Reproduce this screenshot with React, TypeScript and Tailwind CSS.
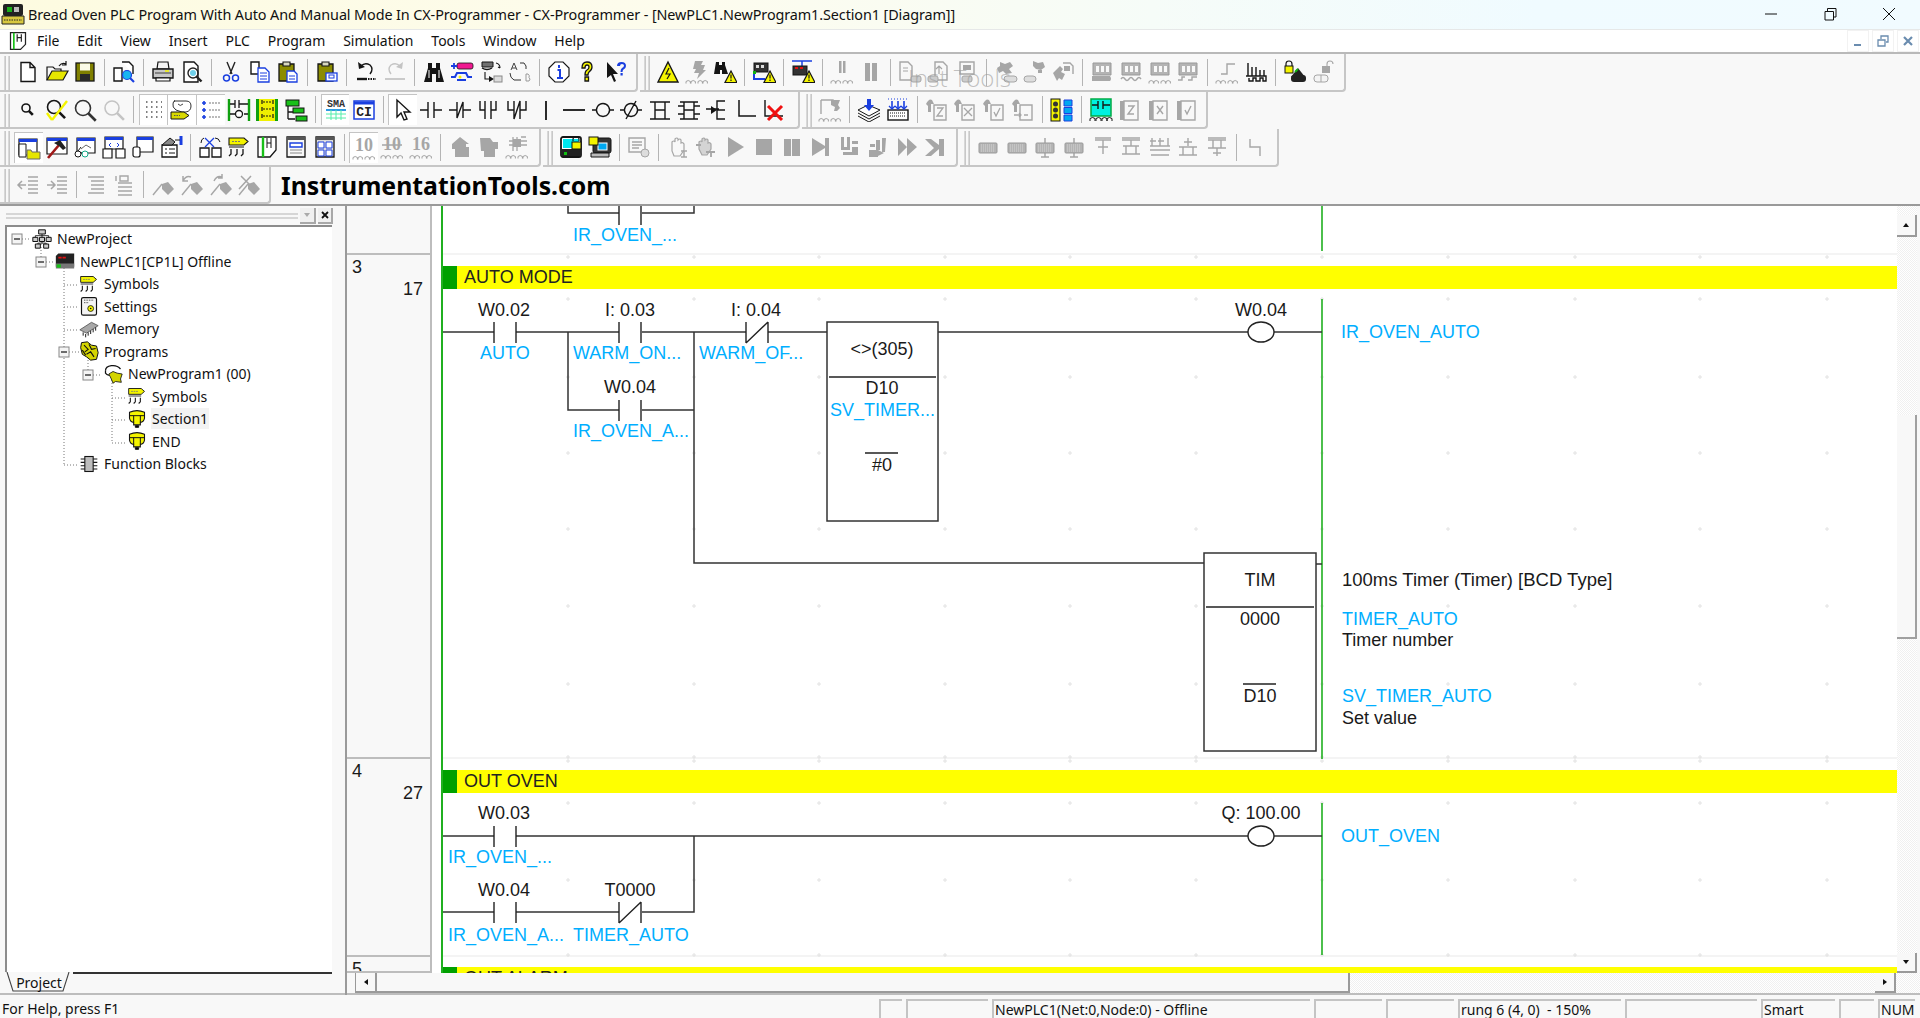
import React from "react";

const K = "#151515";
const G = "#a6a6a6";
const Y = "#f4f400";
const BL = "#1a3fe0";

type SP = { d: string; c?: string; w?: number; f?: string };
const S = ({ d, c = K, w = 1.4, f = "none" }: SP) => <path d={d} stroke={c} strokeWidth={w} fill={f} />;
const F = ({ d, c = G }: { d: string; c?: string }) => <path d={d} fill={c} />;
const Tx = ({ x, y, s, c = K, t, fam = "Liberation Mono, monospace" }: { x: number; y: number; s: number; c?: string; t: string; fam?: string }) => (
  <text x={x} y={y} fontSize={s} fill={c} textAnchor="middle" fontFamily={fam} fontWeight="bold">
    {t}
  </text>
);
const SERIF = "Liberation Serif, serif";
const Wave = <S d="M1 23.5v-2q2.2-2 4.4 0v2M6 23.5v-2q2.2-2 4.4 0v2M13 23.5v-2q2.2-2 4.4 0v2M18 23.5v-2q2.2-2 4.4 0v2" c="#999" w={0.9} />;
const Warn = ({ x = 12, y = 11 }: { x?: number; y?: number }) => (
  <g transform={`translate(${x} ${y})`}>
    <path d="M6 0l6 11.5H0z" fill={Y} stroke={K} strokeWidth="1.2" />
    <path d="M6 3.5v4M6 8.5v1.5" stroke={K} strokeWidth="1.2" />
  </g>
);
const Mag = ({ c = K, r = 6, x = 10, y = 10, k = 1.6 }: { c?: string; r?: number; x?: number; y?: number; k?: number }) => (
  <g>
    <circle cx={x} cy={y} r={r} fill="none" stroke={c} strokeWidth={k} />
    <path d={`M${x + r * 0.7} ${y + r * 0.7}l${r} ${r}`} stroke={c} strokeWidth={k + 1} />
  </g>
);
const Sym = (
  <>
    <path d="M2 3h15l4 3.5-4 3.5H2z" fill={Y} stroke={K} strokeWidth="1.1" />
    <path d="M5 6.5h8" stroke="#777" strokeWidth="1" strokeDasharray="2 1" />
    <path d="M2 12h15" stroke={K} strokeWidth="1" />
    <S d="M4 14v5l-2 2M10 14v5l-2 2M16 14v5l-2 2" w={1.3} />
  </>
);
const Cup = (
  <>
    <path d="M3 4q9-4 18 0v7q-1 5-5 5v3h-8v-3q-4 0-5-5z" fill={Y} stroke={K} strokeWidth="1.3" />
    <path d="M3 8h18M8 8v8M16 8v8M10 20h4v2h-4z" stroke={K} strokeWidth="1.2" />
  </>
);
const Chip = (
  <>
    <rect x="7" y="3" width="10" height="18" fill="#bdbdbd" stroke={K} strokeWidth="1.3" />
    <path d="M2 6h5M2 10h5M2 14h5M2 18h5M17 6h5M17 10h5M17 14h5M17 18h5" stroke={K} strokeWidth="1.3" />
  </>
);
const GDoc = ({ m }: { m: string }) => (
  <>
    <F d="M1 6q3-6 6-4l2 4H6v8H3V8z" />
    <path d="M9 7h12v15H9z" fill="#f8f8f8" stroke={G} strokeWidth="1.4" />
    <S d={m} c={G} w={1.3} />
  </>
);
const GFlag = ({ m }: { m: string }) => (
  <>
    <F d="M11 11l6-2 6 7-6 6-6-6z" />
    <S d="M2 22l9-11" c={G} w={1.4} />
    <S d={m} c={G} w={1.5} />
  </>
);
const Bus = ({ m }: { m: string }) => <S d={m} c={G} w={1.4} />;
const GChip = ({ v }: { v?: boolean }) => (
  <>
    {v && <path d="M12 3v5M12 18v4M8 22h8" stroke={G} strokeWidth="1.5" />}
    <rect x="3" y="8" width="18" height="10" rx="1" fill="#b4b4b4" stroke="#999" strokeWidth="1" />
    <path d="M5 10h14M5 12h14M5 14h14M5 16h14" stroke="#ddd" strokeWidth="0.8" strokeDasharray="1 1" />
  </>
);
const Mem = (
  <>
    <path d="M3 3h18v12H3z" fill="#b4b4b4" stroke="#999" />
    <path d="M6 6h3v6H6zM11 6h3v6h-3zM16 6h3v6h-3z" fill="#f8f8f8" />
  </>
);

const icons: Record<string, React.ReactNode> = {
  new: <S d="M5 2.5h9l5 5v14H5zM14 2.5v5h5" f="#fff" />,
  open: (
    <>
      <path d="M2 20V7h6l2 2h6v3" fill="#f8f8f8" stroke={K} strokeWidth="1.2" />
      <path d="M2 20l5-9h16l-5 9z" fill="#e6e600" stroke={K} strokeWidth="1.2" />
      <S d="M14 6q3-4 7-2M21 1v4h-4" w={1.2} />
    </>
  ),
  save: (
    <>
      <rect x="3" y="3" width="18" height="18" fill="#808000" stroke={K} strokeWidth="1.3" />
      <rect x="7" y="3.5" width="10" height="7" fill="#fbfbe8" />
      <rect x="7" y="14" width="10" height="7" fill="#2a2a2a" />
    </>
  ),
  docfind: (
    <>
      <S d="M2 8h8v13H2z" f="#fff" />
      <S d="M10 2h7l4 4v8" f="#fff" />
      <circle cx="15" cy="15" r="4.5" fill="#19b5f0" stroke={BL} strokeWidth="1.2" />
      <path d="M18 18l4 4" stroke={BL} strokeWidth="2.2" />
    </>
  ),
  print: (
    <>
      <path d="M7 2h10l1 7H6z" fill="#f4f4f4" stroke={K} strokeWidth="1.2" />
      <path d="M2 9h20v9H2z" fill="#c8c8c8" stroke={K} strokeWidth="1.4" />
      <path d="M5 18h14v3H5z" fill="#fff" stroke={K} strokeWidth="1.2" />
      <path d="M4 13h16" stroke="#555" strokeWidth="1.2" />
      <path d="M14 11h4" stroke={Y} strokeWidth="1.5" />
    </>
  ),
  preview: (
    <>
      <S d="M4 2h10l4 4v16H4z" f="#fff" />
      <Mag x={13} y={13} r={5} c="#222" k={1.4} />
      <circle cx="13" cy="13" r="3" fill="#6fd0ea" />
    </>
  ),
  cut: (
    <>
      <S d="M8 2l5 12M16 2l-5 12" c="#222" w={1.4} />
      <circle cx="7.5" cy="18" r="3" fill="none" stroke={BL} strokeWidth="1.5" />
      <circle cx="16.5" cy="18" r="3" fill="none" stroke={BL} strokeWidth="1.5" />
    </>
  ),
  copy: (
    <>
      <S d="M3 2h8v12H3z" f="#fff" />
      <path d="M10 8h7l4 4v10H10z" fill="#fff" stroke={BL} strokeWidth="1.3" />
      <path d="M12 13h7M12 16h7M12 19h7" stroke={BL} strokeWidth="1" />
    </>
  ),
  paste: (
    <>
      <path d="M3 4h15v17H3z" fill="#8c8c00" stroke={K} strokeWidth="1.3" />
      <path d="M7 2h7v4H7z" fill="#d8d8c0" stroke={K} strokeWidth="1.1" />
      <path d="M11 11h7l3 3v8H11z" fill="#fff" stroke={BL} strokeWidth="1.3" />
      <path d="M13 16h6M13 19h6" stroke={BL} strokeWidth="1" />
    </>
  ),
  paste2: (
    <>
      <path d="M3 4h15v17H3z" fill="#8c8c00" stroke={K} strokeWidth="1.3" />
      <path d="M7 2h7v4H7z" fill="#d8d8c0" stroke={K} strokeWidth="1.1" />
      <rect x="11" y="13" width="11" height="8" fill="#fff" stroke={BL} strokeWidth="1.3" />
      <rect x="14" y="15" width="5" height="3" fill="#fff" stroke={BL} strokeWidth="1" />
    </>
  ),
  undo: (
    <>
      <S d="M16 14q4-5 0-9-5-3-9 1" w={1.4} />
      <path d="M4 2l1 7 6-2z" fill={K} />
      <path d="M3 19h10" stroke={K} strokeWidth="2.4" />
      <path d="M14 19h8" stroke={K} strokeWidth="2" strokeDasharray="1.5 1" />
    </>
  ),
  redo: (
    <>
      <S d="M8 14q-4-5 0-9 5-3 9 1" c="#c4c4c4" w={1.4} />
      <path d="M20 2l-1 7-6-2z" fill="#c4c4c4" />
      <path d="M2 19h20" stroke="#c4c4c4" strokeWidth="1.8" />
    </>
  ),
  binoc: (
    <>
      <F c={K} d="M6 3h4v5h4V3h4v5l4 14h-8v-8h-4v8H2L6 8z" />
      <path d="M7 10v8M17 10v8" stroke="#fff" strokeWidth="1" />
    </>
  ),
  link: (
    <>
      <rect x="7" y="3" width="16" height="6" rx="2" fill="#f01890" stroke={K} strokeWidth="0.8" />
      <S d="M1 6h6M4 3v6" c={BL} w={1.8} />
      <S d="M1 17h4l2-4h9l2 4h4M7 20h9" c={BL} w={2} />
      <circle cx="10" cy="17" r="1.5" fill={Y} />
    </>
  ),
  swap: (
    <>
      <path d="M3 2h11v5H3z" fill="#707070" stroke={K} strokeWidth="1" />
      <path d="M3 8q5 3 10 0" stroke={K} strokeWidth="1.4" fill="none" />
      <S d="M17 3q4 1 4 5M21 8l-2-1M6 12v7h4" w={1.1} />
      <path d="M10 16l5 3-5 3z" fill={K} />
      <rect x="15" y="16" width="8" height="6" fill="#ddd" stroke="#888" />
    </>
  ),
  ab: (
    <>
      <S d="M6 3l3 7M6 3l-3 7M4 8h4" c="#444" w={1} />
      <S d="M12 3h4q3 3 2 6M2 13q0 5 4 7h7" c="#333" w={1} />
      <path d="M18 14v7h3q2-2 0-3.5q1-2-1-3.5z" fill="none" stroke="#999" />
    </>
  ),
  info: (
    <>
      <path d="M8 2h8l6 6v8l-6 6H8l-6-6V8z" fill="#fff" stroke={K} strokeWidth="1.2" />
      <path d="M10.5 10H13v8M10 18h6M12 5v3" stroke={BL} strokeWidth="2" fill="none" />
    </>
  ),
  help: <path d="M7 8q0-6 5-6t5 5q0 3-3 5-1 1-1 3h-3q0-4 2-5 2-1 2-3 0-2-2-2-2 0-2 3zM10 17h3.5v4H10z" fill={Y} stroke={K} strokeWidth="1.3" />,
  helpptr: (
    <>
      <path d="M3 2v16l4-3 3 7 2-1-3-7h5z" fill={K} />
      <path d="M13 6q0-4 4.5-4T22 6q0 2-2.5 3.5-1 .5-1 2.5h-2q0-3 1.5-4 2-1 2-2.5 0-1.5-2-1.5-2 0-2 2zM16.5 13h2.2v2.5h-2.2z" fill={BL} />
    </>
  ),
  warn7: (
    <>
      <path d="M12 2l10 20H2z" fill={Y} stroke={K} strokeWidth="1.4" />
      <path d="M13 8l-3 6h4l-3 5" stroke={K} strokeWidth="1.2" fill="none" />
    </>
  ),
  gbolt: (
    <>
      <F d="M10 1h8l-2 4h4l-2 5h3l-9 9 2-6H9l2-4H8z" />
      {Wave}
    </>
  ),
  binwarn: (
    <>
      <F c={K} d="M3 2h3v3h3V2h3v3l3 9H9v-4H7v4H1z" />
      <Warn />
    </>
  ),
  boxwarn: (
    <>
      <rect x="2" y="3" width="14" height="9" fill="#333" stroke={K} />
      <path d="M4 5h3v3H4zM9 5h3v3H9z" fill="#ddd" />
      <path d="M2 12v7h11" stroke={BL} strokeWidth="2" fill="none" />
      <rect x="1" y="11" width="3" height="3" fill="#10b010" />
      <Warn />
    </>
  ),
  topwarn: (
    <>
      <path d="M1 1h20M11 1v5" stroke={BL} strokeWidth="1.5" />
      <rect x="2" y="6" width="14" height="9" fill="#333" stroke={K} />
      <path d="M4 8h3M9 8h3" stroke="#e01010" strokeWidth="2" />
      <Warn />
    </>
  ),
  gpause2: (
    <>
      <path d="M9 1h2.5v12H9zM13 1h2.5v12H13z" fill={G} />
      {Wave}
    </>
  ),
  gpause: <path d="M6 3h5v18H6zM13 3h5v18h-5z" fill={G} />,
  gdoc1: (
    <>
      <S d="M2 2h8l4 4v14H2z" c={G} />
      <S d="M5 8h5M5 11h5" c={G} w={1} />
      <rect x="13" y="16" width="10" height="6" rx="2" fill="#ccc" stroke={G} />
    </>
  ),
  gdoc2: (
    <>
      <S d="M8 2h8l4 4v14H8z" c={G} />
      <path d="M12 6v8M9 9l3-3 3 3" stroke={G} strokeWidth="1.2" fill="none" />
      <rect x="1" y="16" width="10" height="6" rx="2" fill="#ccc" stroke={G} />
    </>
  ),
  gdoc3: (
    <>
      <S d="M5 2h14v12H5z" c={G} />
      <path d="M8 5h8v5H8z" fill={G} />
      <rect x="7" y="16" width="10" height="6" rx="2" fill="#ccc" stroke={G} />
    </>
  ),
  gflow1: (
    <>
      <F d="M6 2l5 2 5-2 3 4-4 3 3 4-6 1-3-3-4 2-2-5 3-2z" />
      <rect x="10" y="16" width="13" height="6" rx="3" fill="#ddd" stroke={G} />
    </>
  ),
  gflow2: (
    <>
      <F d="M10 1l5 2 5-1 2 5-4 3-5-1-3-3z" />
      <F d="M15 10h4v3h-4z" />
      <rect x="1" y="16" width="12" height="6" rx="3" fill="#ddd" stroke={G} />
    </>
  ),
  gflow3: (
    <>
      <S d="M12 3h7l3 3v8" c={G} />
      <F d="M2 13l7-7 3 3-2 3 4 2-3 6-3-2-2 3z" />
      <F d="M13 6h6v5h-6z" />
    </>
  ),
  mem1: (
    <>
      {Mem}
      <path d="M2 16h18q2 3 0 5H2z" fill="#a8a8a8" />
    </>
  ),
  mem2: (
    <>
      {Mem}
      <S d="M2 19q2-3 4 0t4 0 4 0 4 0 4 0" c={G} />
    </>
  ),
  mem3: (
    <>
      {Mem}
      {Wave}
    </>
  ),
  mem4: (
    <>
      {Mem}
      <S d="M2 20h4v-3h3M12 20h4v-3h5" c={G} />
    </>
  ),
  step: (
    <>
      <S d="M6 14h6V4h8" c={G} />
      {Wave}
    </>
  ),
  pulse: <S d="M4 3v13M8 7v9M12 7v9M16 10v6M20 10v6M2 16h20v5h-3v-3h-3v3h-4v-3H9v3H5v-3" w={1.4} />,
  lock: (
    <>
      <S d="M3 6V4q0-3 3-3t3 3v2" w={1.2} />
      <rect x="2" y="6" width="8" height="7" fill={Y} stroke={K} />
      <path d="M15 8l7 9H8z" fill="#222" />
      <path d="M12 12l3-3" stroke="#10b010" strokeWidth="2" />
      <rect x="8" y="15" width="15" height="7" rx="3" fill="#222" />
    </>
  ),
  unlock: (
    <>
      <S d="M16 6V4q0-3 3-3t3 3" c={G} w={1.1} />
      <rect x="11" y="6" width="8" height="7" fill={G} />
      <rect x="3" y="15" width="14" height="7" rx="3" fill="#f4f4f4" stroke={G} />
      <path d="M10 15v7" stroke={G} />
    </>
  ),
  zs: <Mag x={10} y={10} r={4} />,
  zcheck: (
    <>
      <Mag x={9} y={9} r={6.5} />
      <path d="M7 22L22 3" stroke={Y} strokeWidth="2.4" />
      <path d="M2 15l5 7" stroke={Y} strokeWidth="2.4" />
    </>
  ),
  z: <Mag x={10} y={10} r={7.5} c="#333" />,
  zg: <Mag x={10} y={10} r={7} c="#c4c4c4" />,
  grid: <path d="M4 4h16M4 9h16M4 14h16M4 19h16" stroke="#555" strokeWidth="1.5" strokeDasharray="1.5 3.5" />,
  bubble: (
    <>
      <path d="M4 3h12q5 0 5 5t-5 6l-4 0-6-2q-4-3-3-6 0-3 2-3z" fill="#fff" stroke="#333" />
      <path d="M8 6q2 3 5 0" stroke="#444" fill="none" />
      <path d="M1 14h13l5 3.5-5 3.5H1z" fill="#d8d800" stroke={K} />
      <path d="M4 17.5h6" stroke="#555" strokeDasharray="1.5 1" />
    </>
  ),
  list: (
    <>
      <path d="M5 3v4M3 5h4M5 10v4M3 12h4M5 17v4M3 19h4" stroke={BL} strokeWidth="1.6" />
      <path d="M10 5h11M10 12h11M10 19h11" stroke="#777" strokeWidth="1.2" strokeDasharray="2 1" />
    </>
  ),
  rungs: (
    <>
      <path d="M2 1v22M22 1v22" stroke="#10a010" strokeWidth="2.4" />
      <S d="M3 6h5M8 2v8M12 2v8M12 6h9M3 16h5M17 16h4" w={1.3} />
      <circle cx="12" cy="16" r="3.5" fill="#fff" stroke={K} strokeWidth="1.3" />
    </>
  ),
  ybar: (
    <>
      <path d="M1 1h3v22H1zM20 1h3v22h-3z" fill="#10a010" />
      <path d="M4 1h16v22H4z" fill="#f0f000" />
      <path d="M8 4h9M8 11h9M8 18h9" stroke={K} strokeWidth="1.2" strokeDasharray="2 1" />
      <path d="M7 2v4M18 2v4M7 9v4M18 9v4M7 16v4M18 16v4" stroke={K} strokeWidth="1.2" />
    </>
  ),
  tree: (
    <>
      <path d="M4 8v13M4 14h7M4 21h7" stroke={K} strokeWidth="1.3" fill="none" />
      <rect x="2" y="2" width="13" height="6" fill="#18c018" stroke={K} />
      <rect x="9" y="10" width="11" height="5" fill="#18c018" stroke={K} />
      <rect x="12" y="18" width="11" height="5" fill="#18c018" stroke={K} />
    </>
  ),
  sma: (
    <>
      <Tx x={12} y={9} s={10} t="SMA" c="#333" />
      <path d="M2 12h20" stroke="#1890e0" strokeWidth="1.8" />
      <path d="M2 16h20M2 20h20M7 12v10M12 12v10M17 12v10" stroke="#5ea" strokeWidth="1" />
    </>
  ),
  ci: (
    <>
      <rect x="2" y="3" width="20" height="18" fill="#fff" stroke={BL} strokeWidth="1.5" />
      <path d="M2 5h20" stroke={BL} strokeWidth="3" />
      <Tx x={12} y={18} s={13} t="CI" c="#222" />
    </>
  ),
  cursor: <path d="M6 2v17l4-4 3 7 3-1-3-7h6z" fill="#fff" stroke={K} strokeWidth="1.4" />,
  cno: <S d="M1 12h8M9 4v16M15 4v16M15 12h8" />,
  cnc: <S d="M1 12h8M9 4v16L15 4v16M15 12h8" />,
  ono: <S d="M4 3v9h5M9 21V3M15 3v18M15 12h5V3" />,
  onc: <S d="M3 3v9h6M9 3v18L15 3v18M15 12h6V3" />,
  vl: <S d="M12 3v19" w={1.8} />,
  hl: <S d="M1 12h22" w={1.8} />,
  coil: <S d="M1 12h5M18 12h5M12 5.5a6.5 6.5 0 1 0 .01 0z" />,
  ncoil: <S d="M1 12h5M18 12h5M12 5.5a6.5 6.5 0 1 0 .01 0zM7 21L17 3" />,
  ins: <S d="M2 4h20M2 21h20M7 4v17M17 4v17M7 12h10" />,
  ins2: <S d="M3 4h18M3 21h18M7 4v17M17 4v17M7 12h10M1 8h6M1 16h6M17 8h6M17 16h6" />,
  ins3: (
    <>
      <S d="M1 11h6M20 3h-8v18h8M12 12h8M14 11H7" />
      <path d="M6 8l6 4-6 4z" fill={K} />
    </>
  ),
  corner: <S d="M5 2v16h17" w={1.5} />,
  xline: (
    <>
      <S d="M3 2v16h18" />
      <path d="M6 8l14 14M20 8L6 22" stroke="#f01010" strokeWidth="3" />
    </>
  ),
  gdocrung: (
    <>
      <S d="M3 2h12v5" c={G} />
      <S d="M3 2v14" c={G} />
      <F d="M13 2h9l-2 5 2 3-3 3h-3l1-4-4-2z" />
      {Wave}
    </>
  ),
  stackdown: (
    <>
      <path d="M1 12l10-5 12 5-11 6z" fill="#fff" stroke={K} />
      <path d="M1 15l11 6 11-6M1 18l11 6 11-6" fill="none" stroke={K} />
      <path d="M10 1h4v6h3l-5 6-5-6h3z" fill={BL} />
    </>
  ),
  griddown: (
    <>
      <rect x="2" y="12" width="20" height="10" fill="#fff" stroke={K} strokeWidth="1.4" />
      <path d="M4 15h16M4 18h16" stroke={K} strokeDasharray="1 1" />
      <path d="M6 3v7M12 3v7M18 3v7" stroke={BL} strokeWidth="1.6" />
      <path d="M3 8l3 3 3-3M9 8l3 3 3-3M15 8l3 3 3-3" stroke={BL} fill="none" strokeWidth="1.3" />
      <path d="M2 1h20" stroke={BL} strokeDasharray="1 2" />
    </>
  ),
  gdz: <GDoc m="M12 10h6l-6 8h6" />,
  gdx: <GDoc m="M11 10l8 8M19 10l-8 8" />,
  gdchk: <GDoc m="M12 14l2 4 4-8" />,
  gdin: <GDoc m="M3 17h7M8 15l2 2-2 2M13 17h4" />,
  traffic: (
    <>
      <rect x="1" y="1" width="9" height="22" fill={Y} stroke={K} />
      <circle cx="5.5" cy="6" r="2.5" fill="#333" />
      <circle cx="5.5" cy="12" r="2.5" fill="#333" />
      <circle cx="5.5" cy="18" r="2.5" fill="#333" />
      <path d="M14 2h8v6h-8zM14 9.5h8v6h-8zM14 17h8v6h-8z" fill="#00a8f0" stroke={BL} />
    </>
  ),
  ladder: (
    <>
      <rect x="2" y="1" width="20" height="17" fill="#00f0e0" stroke="#0a4" strokeWidth="1.5" />
      <S d="M3 7h6M9 3v8M14 3v8M14 7h7" />
      <S d="M1 23v-2.5q2.5-2 5 0V23M7 23v-2.5q2.5-2 5 0V23M13 23v-2.5q2.5-2 5 0V23M18 23v-2.5q2.5-2 5 0V23" w={1} />
    </>
  ),
  gpgz: <><path d="M3 3h4v19H3z" fill={G} /><S d="M7 3h14v19H7zM11 8h6l-6 8h6" c={G} /></>,
  gpgx: <><path d="M3 3h4v19H3z" fill={G} /><S d="M7 3h14v19H7zM11 8l6 8M17 8l-6 8" c={G} /></>,
  gpgc: <><path d="M3 3h4v19H3z" fill={G} /><S d="M7 3h14v19H7zM11 12l2 4 4-8" c={G} /></>,
  winf: (
    <>
      <path d="M2 3h18v16H2z" fill="#fff" stroke={K} strokeWidth="1.2" />
      <path d="M2 3h18v3H2z" fill={BL} />
      <path d="M2 8h7v13H2z" fill="#fff" stroke={K} />
      <path d="M10 14h4l1 2h8v7H10z" fill="#e6e600" stroke="#666" />
    </>
  ),
  hammer: (
    <>
      <path d="M2 3h20v16H2z" fill="#fff" stroke={K} strokeWidth="1.2" />
      <path d="M2 3h20v3H2z" fill={BL} />
      <path d="M3 23L14 10" stroke="#a01818" strokeWidth="2.6" />
      <path d="M9 8l6-3 6 8-3 2-4-4z" fill="#222" />
    </>
  ),
  glass: (
    <>
      <path d="M4 3h18v15H4z" fill="#fff" stroke={K} strokeWidth="1.2" />
      <path d="M4 3h18v3H4z" fill={BL} />
      <path d="M8 14l5-4 5 3" stroke="#666" fill="none" />
      <circle cx="5" cy="19" r="3" fill="#fff" stroke={K} />
      <circle cx="12" cy="19" r="3" fill="#fff" stroke="#1a8" />
      <path d="M8 18h1M5 16l3-4" stroke={K} />
    </>
  ),
  win2: (
    <>
      <path d="M3 2h18v12H3z" fill="#fff" stroke={K} strokeWidth="1.2" />
      <path d="M3 2h18v3H3z" fill={BL} />
      <path d="M9 8l-2 2 2 2M15 8l2 2-2 2" stroke={BL} fill="none" />
      <path d="M1 14h9v9H1zM14 14h9v9h-9z" fill="#fff" stroke={K} strokeWidth="1.2" />
    </>
  ),
  win3: (
    <>
      <path d="M6 2h16v15H6z" fill="#fff" stroke={K} strokeWidth="1.2" />
      <path d="M6 2h16v3H6z" fill={BL} />
      <rect x="2" y="12" width="7" height="10" rx="2" fill="#fff" stroke={K} strokeWidth="1.2" />
    </>
  ),
  conf: (
    <>
      <path d="M3 10h15v12H3z" fill="#fff" stroke={K} strokeWidth="1.3" />
      <path d="M6 14h2M6 18h2M10 14h6M10 18h6" stroke={K} />
      <path d="M3 10l8-7 5 4-3 3z" fill="#888" stroke={K} />
      <path d="M22 1v9" stroke={BL} strokeWidth="3" />
      <path d="M16 5h5" stroke={K} />
    </>
  ),
  dup: (
    <>
      <path d="M2 13h9v9H2zM14 13h9v9h-9z" fill="#fff" stroke={K} strokeWidth="1.3" />
      <path d="M7 3l9 9M16 3l-9 9" stroke={BL} strokeWidth="1.3" />
      <S d="M3 8q0-4 3-5M17 3q4 0 5 4" w={1} />
    </>
  ),
  sym: Sym,
  ldoc: (
    <>
      <path d="M3 2h18v13l-6 7H3z" fill="#fff" stroke={K} strokeWidth="1.3" />
      <path d="M8 2v20" stroke="#18c018" strokeWidth="2.4" />
      <path d="M12 3v10M16 3v10M12 8h4" stroke={K} />
    </>
  ),
  form: (
    <>
      <path d="M3 2h18v20H3z" fill="#f8f8f8" stroke={K} strokeWidth="1.3" />
      <path d="M3 2h18v3H3z" fill="#555" />
      <path d="M6 8h12v4H6z" fill="#fff" stroke={BL} strokeWidth="1.4" />
      <path d="M6 15h12M6 18h12" stroke="#888" />
    </>
  ),
  tbl: (
    <>
      <path d="M3 2h18v20H3z" fill="#ddd" stroke={K} strokeWidth="1.3" />
      <path d="M3 2h18v3H3z" fill="#555" />
      <path d="M5 7h6v6H5zM13 7h6v6h-6zM5 15h6v6H5zM13 15h6v6h-6z" fill="#fff" stroke={BL} />
    </>
  ),
  n10: (
    <>
      <Tx x={12} y={15} s={18} t="10" c={G} fam={SERIF} />
      {Wave}
    </>
  ),
  n10s: (
    <>
      <Tx x={12} y={15} s={18} t="10" c={G} fam={SERIF} />
      <path d="M2 10h20" stroke={G} strokeWidth="1.5" />
      {Wave}
    </>
  ),
  n16: (
    <>
      <Tx x={12} y={15} s={18} t="16" c={G} fam={SERIF} />
      {Wave}
    </>
  ),
  gh1: <F d="M12 2l9 7h-3v3h3v10H7v-8H4V9z" />,
  gh2: <F d="M4 3h10l3 4h5v7h-3v8H8v-6H5z" />,
  gh3: (
    <>
      <S d="M8 2v14M12 2v14M16 2h5M16 6h6M16 10h6M4 6h4M4 10h4" c={G} w={1.3} />
      <F d="M8 4h8v8H8z" />
      {Wave}
    </>
  ),
  mon: (
    <>
      <rect x="2" y="2" width="20" height="20" rx="2" fill="#fff" stroke={K} strokeWidth="1.8" />
      <rect x="4" y="4" width="16" height="9" fill="#00e8f0" />
      <path d="M2 14h20v7H2z" fill="#222" />
      <path d="M5 17h3v3H5z" fill="#10c010" />
      <S d="M14 6V4q0-2 3-2t3 2v2" w={1.1} />
      <rect x="13" y="7" width="9" height="7" fill={Y} stroke={K} />
    </>
  ),
  mon2: (
    <>
      <rect x="5" y="3" width="18" height="15" rx="2" fill="#333" stroke={K} />
      <rect x="10" y="8" width="9" height="7" fill="#00a8f0" stroke="#fff" />
      <rect x="1" y="2" width="9" height="8" fill={Y} stroke={K} />
      <path d="M3 18h18v4H3z" fill="#bbb" stroke={K} />
    </>
  ),
  gdocx: (
    <>
      <S d="M2 3h16v14H2zM5 7h10M5 10h10M5 13h7" c={G} />
      <circle cx="18" cy="18" r="4" fill="#ddd" stroke={G} />
    </>
  ),
  hand: (
    <>
      <S d="M6 16V7q2-2 3 0V4q2-2 3 0v1q2-2 3 0v3q2-1 3 1v6l-4 6h-6z" c={G} w={1.2} />
      <path d="M15 16h6M18 16v6M15 22h6" stroke={G} strokeWidth="1.5" />
    </>
  ),
  hand2: (
    <>
      <path d="M5 14V7q2-2 3 0V4q2-2 3 0v1q2-2 3 0v3q2-1 3 1v5l-4 6H8z" fill="#d4d4d4" stroke={G} strokeWidth="1.2" />
      <path d="M2 10h5M12 17h9M17 17v5" stroke={G} strokeWidth="1.8" />
    </>
  ),
  play: <F d="M5 2l16 10L5 22z" />,
  stop: <F d="M4 4h16v16H4z" />,
  pause: <path d="M4 4h7v17H4zM12 4h8v17h-8z" fill={G} />,
  next: <F d="M3 3l13 8V3h4v18h-4v-8L3 21z" />,
  stepin: <path d="M4 2h3v10h3V2h3v13H4zM15 6h6v3h-6zM15 12h6v8H6v-3h9z" fill={G} />,
  stepout: <path d="M16 3h4l-1 14h-3zM10 5h4v10h-4zM4 9h5v3H4zM3 15h9v7H3zM12 15l6 3-6 3z" fill={G} />,
  ff: <F d="M3 3l9 9-9 9zM12 3l10 9-10 9z" />,
  end: <path d="M2 4h6l8 6V4h5v17h-5v-7l-8 7H2l9-8z" fill={G} />,
  ch1: <GChip />,
  ch2: <GChip />,
  ch3: <GChip v />,
  ch4: <GChip v />,
  b1: <Bus m="M4 3h16M4 5h16M12 5v14M7 12h10" />,
  b2: <Bus m="M3 3h18M3 5h18M12 5v6M4 11h16M7 11v8M17 11v8M3 19h18" />,
  b3: <Bus m="M4 3v8M12 3v8M20 3v8M2 6h6M10 6h6M2 11h20M2 15h20M3 20h18" />,
  b4: <Bus m="M12 3v8M8 7h8M3 12h18M7 12v8M17 12v8M3 20h18" />,
  b5: <Bus m="M3 3h18M3 5h18M8 5v8M16 5v8M3 13h18M12 13v8M8 18h8" />,
  ang: <S d="M6 4v8h10v9" c={G} w={1.4} />,
  gin: <S d="M2 12h8M6 8l-4 4 4 4M12 4h10M12 8h10M12 12h10M12 16h10M12 20h10" c={G} w={1.5} />,
  gout: <S d="M2 12h8M6 8l4 4-4 4M12 4h10M12 8h10M12 12h10M12 16h10M12 20h10" c={G} w={1.5} />,
  gl1: <S d="M4 4h16M7 8h13M7 12h13M7 16h13M4 20h16" c={G} w={1.4} />,
  gl2: <S d="M8 3h8v5H8zM4 3v5M6 10h14M6 14h14M6 18h14M6 22h14" c={G} w={1.4} />,
  gf1: <GFlag m="" />,
  gf2: <GFlag m="M3 8q3-6 8-4M3 3v5h5" />,
  gf3: <GFlag m="M5 8q3-6 8-4M13 1v4H9" />,
  gf4: <GFlag m="M4 3l14 14M2 16L14 3" />,
};

const BarIcon = ({ k }: { k: string }) => (
  <svg viewBox="0 0 24 24" className="w-6 h-6">
    {icons[k]}
  </svg>
);

type Tb = { cls: string; items: string };
const rows: Tb[][] = [
  [
    { cls: "w-[638px]", items: "new open save | docfind | print preview | cut copy paste | paste2 | undo redo | binoc link swap ab | info help helpptr" },
    { cls: "w-[706px]", items: "warn7 gbolt binwarn | boxwarn | topwarn | gpause2 gpause | gdoc1 gdoc2 gdoc3 | gflow1 gflow2 gflow3 | mem1 mem2 mem3 mem4 | step pulse | lock unlock" },
  ],
  [
    { cls: "w-[800px]", items: "zs zcheck z zg | *grid *bubble *list rungs ybar tree | *sma ci | *cursor cno cnc ono onc vl hl coil ncoil ins ins2 ins3 corner xline" },
    { cls: "w-[406px]", items: "gdocrung | stackdown griddown | gdz gdx gdchk gdin | traffic | ladder gpgz gpgx gpgc" },
  ],
  [
    { cls: "w-[541px]", items: "*winf hammer glass win2 win3 conf | dup sym ldoc form tbl | *n10 n10s n16 | gh1 gh2 gh3" },
    { cls: "w-[415px]", items: "mon mon2 | gdocx | hand hand2 play stop pause next stepin stepout ff end" },
    { cls: "w-[319px]", items: "ch1 ch2 ch3 ch4 b1 b2 b3 b4 b5 | ang" },
  ],
  [{ cls: "w-[271px]", items: "gin gout | gl1 gl2 | gf1 gf2 gf3 gf4" }],
];

function Toolbar({ t }: { t: Tb }) {
  return (
    <div className={`${t.cls} h-full flex items-center border-b-2 border-r-2 border-[#c6c6c6] rounded-br-sm`}>
      <div className="w-[14px] h-full flex justify-center gap-[2px] shrink-0 pt-[2px]">
        <div className="w-[2px] border-x border-[#c8c8c8] border-l-[#d8d8d8]" />
        <div className="w-[2px] border-x border-[#c8c8c8] border-l-[#d8d8d8]" />
      </div>
      {t.items.split(" ").map((it, i) =>
        it === "|" ? (
          <div key={i} className="w-[10.4px] flex justify-center shrink-0">
            <div className="w-px h-[27px] bg-[#b4b4b4]" />
          </div>
        ) : (
          <div
            key={i}
            className={`w-[28.6px] h-[31px] flex items-center justify-center shrink-0 ${
              it[0] === "*" ? "bg-white border-t border-l border-[#c4c4c4]" : ""
            }`}
          >
            <BarIcon k={it.replace("*", "")} />
          </div>
        )
      )}
    </div>
  );
}

function TitleBar() {
  return (
    <div className="h-[30px] flex items-center bg-[linear-gradient(90deg,#fdfbe0_0%,#fdfced_35%,#f6fcf8_60%,#f0fbff_80%,#f1fbff_100%)] border-b border-[#e6e8e8]">
      <svg viewBox="0 0 24 24" className="w-6 h-6 ml-px shrink-0">
        <rect x="2" y="2" width="20" height="12" rx="2" fill="#222" />
        <path d="M6 5h5v5H6z" fill="#18b018" />
        <path d="M13 5h5v5h-5z" fill="#bbb" />
        <path d="M1 14h22v8H1z" fill="#d8c840" stroke="#222" />
        <path d="M3 18h18" stroke="#222" strokeDasharray="1.5 1" />
      </svg>
      <span className="ml-[3px] text-[14.4px] text-[#111] font-['Noto_Sans',sans-serif] tracking-[-0.1px] whitespace-nowrap">
        Bread Oven PLC Program With Auto And Manual Mode In CX-Programmer - CX-Programmer - [NewPLC1.NewProgram1.Section1 [Diagram]]
      </span>
      <div className="ml-auto flex pr-[2px]">
        <div className="w-[59px] flex justify-center">
          <svg viewBox="0 0 14 14" className="w-[14px] h-[14px]"><path d="M1 7h12" stroke="#111" strokeWidth="1" /></svg>
        </div>
        <div className="w-[59px] flex justify-center">
          <svg viewBox="0 0 14 14" className="w-[14px] h-[14px]"><path d="M2 4.5h8.5V13H2zM4.5 4V1.5H13V10h-2.5" fill="none" stroke="#111" strokeWidth="1" /></svg>
        </div>
        <div className="w-[59px] flex justify-center">
          <svg viewBox="0 0 14 14" className="w-[14px] h-[14px]"><path d="M1 1l12 12M13 1L1 13" stroke="#111" strokeWidth="1" /></svg>
        </div>
      </div>
    </div>
  );
}

function MenuBar() {
  return (
    <div className="h-[25px] bg-white flex items-center border-b-2 border-[#b9b9b9] text-[14px] text-[#111] font-['Noto_Sans',sans-serif]">
      <svg viewBox="0 0 24 24" className="w-[20px] h-[20px] ml-[8px]">
        <path d="M3 2h18v14l-6 6H3z" fill="#fff" stroke="#222" strokeWidth="1.5" />
        <path d="M7 2v20" stroke="#18c018" strokeWidth="2" />
        <path d="M11 4v9M16 4v9M11 8h5" stroke="#222" strokeWidth="1.4" />
      </svg>
      <div className="ml-[9px] flex gap-[17.9px]">
        {["File", "Edit", "View", "Insert", "PLC", "Program", "Simulation", "Tools", "Window", "Help"].map((m) => (
          <span key={m}>{m}</span>
        ))}
      </div>
      <div className="ml-auto flex gap-[3px] pr-px">
        <div className="w-[22px] h-[22px] border border-[#f2f2f2] flex items-center justify-center">
          <svg viewBox="0 0 12 12" className="w-3 h-3"><path d="M2 10h7" stroke="#6a8caf" strokeWidth="2" /></svg>
        </div>
        <div className="w-[22px] h-[22px] border border-[#f2f2f2] flex items-center justify-center">
          <svg viewBox="0 0 12 12" className="w-3 h-3"><path d="M1 5h7v6H1zM4 4V1h7v6H9" fill="none" stroke="#6a8caf" strokeWidth="1.3" /></svg>
        </div>
        <div className="w-[22px] h-[22px] border border-[#f2f2f2] flex items-center justify-center">
          <svg viewBox="0 0 12 12" className="w-3 h-3"><path d="M2 2l8 8M10 2l-8 8" stroke="#6a8caf" strokeWidth="2.2" /></svg>
        </div>
      </div>
    </div>
  );
}

const treeIcons: Record<string, React.ReactNode> = {
  project: (
    <>
      <path d="M8 1h8v5H8zM1 10h6v5H1zM9 10h6v5H9zM17 10h6v5h-6zM4 18h6v5H4zM14 18h6v5h-6z" fill="#ccc" stroke="#111" strokeWidth="1.2" />
      <path d="M12 6v4M4 10V8h16v2M12 15v2H7v1M12 17h5v1" stroke="#111" fill="none" />
    </>
  ),
  plc: (
    <>
      <path d="M1 6l3-3h19v16H1z" fill="#222" />
      <path d="M4 7h4v2H4zM9 7h4v2H9z" fill="#e01010" />
      <path d="M1 15h22v6H1z" fill="#777" />
      <path d="M2 16h5v4H2z" fill="#18c018" />
    </>
  ),
  sym: Sym,
  settings: (
    <>
      <rect x="3" y="2" width="18" height="21" rx="2" fill="#f4f4f4" stroke="#111" strokeWidth="1.4" />
      <path d="M6 5h12M6 8h5" stroke="#111" strokeDasharray="1 1" />
      <circle cx="14" cy="15" r="3.5" fill={Y} stroke="#111" />
      <circle cx="14" cy="15" r="1" fill="#111" />
    </>
  ),
  memory: (
    <>
      <path d="M1 13L15 4l8 4-14 9z" fill="#a8a8a8" stroke="#555" />
      <path d="M5 16v4M8 18v4M11 16v4M14 14v4M17 12v4M20 10v4" stroke="#222" strokeWidth="1.2" />
    </>
  ),
  programs: (
    <>
      <path d="M3 2l7-1 5 4 6 1 2 8-2 8-7 1-5-4-5-3-2-8z" fill="#d4d400" stroke="#111" strokeWidth="1.2" />
      <path d="M6 5l5 5-4 3M12 4l3 6 5-1M9 16l5-3 4 6M4 11l4 6" stroke="#111" strokeWidth="1.3" fill="none" />
    </>
  ),
  program: (
    <>
      <path d="M3 8q0-5 7-6t11 4" stroke="#111" strokeWidth="1.5" fill="none" />
      <path d="M3 8v3q2 3 5 2" stroke="#111" strokeWidth="1.5" fill="none" />
      <path d="M7 12l5-3 5 2 6 1-2 6 1 4-7-1-3 2-2-5z" fill="#d4d400" stroke="#111" />
    </>
  ),
  section: Cup,
  fb: Chip,
};

const tree = [
  { t: "NewProject", i: "project", cls: "pl-[25px]" },
  { t: "NewPLC1[CP1L] Offline", i: "plc", cls: "pl-[48px]" },
  { t: "Symbols", i: "sym", cls: "pl-[72px]" },
  { t: "Settings", i: "settings", cls: "pl-[72px]" },
  { t: "Memory", i: "memory", cls: "pl-[72px]" },
  { t: "Programs", i: "programs", cls: "pl-[72px]" },
  { t: "NewProgram1 (00)", i: "program", cls: "pl-[96px]" },
  { t: "Symbols", i: "sym", cls: "pl-[120px]" },
  { t: "Section1", i: "section", cls: "pl-[120px]", sel: true },
  { t: "END", i: "section", cls: "pl-[120px]" },
  { t: "Function Blocks", i: "fb", cls: "pl-[72px]" },
];

const TreeBox = ({ x, y }: { x: number; y: number }) => (
  <g>
    <rect x={x - 5} y={y - 5} width="10" height="10" fill="#f4f4f4" stroke="#888" />
    <path d={`M${x - 3} ${y}h6`} stroke="#111" strokeWidth="1.2" />
  </g>
);

function LeftPanel() {
  return (
    <div className="w-[345px] shrink-0 flex flex-col bg-[#f8f8f8] border-b-2 border-[#bdbdbd]">
      <div className="h-[19px] flex items-center pl-[6px]">
        <div className="w-[292px] h-[6px] border-y-2 border-[#d6d6d6]" />
        <div className="w-[16px] h-[16px] ml-[2px] bg-[#f0f0f0] border-r-2 border-b-2 border-[#a8a8a8] flex items-center justify-center">
          <svg viewBox="0 0 8 8" className="w-2 h-2"><path d="M1 2h6L4 6z" fill="#aaa" /></svg>
        </div>
        <div className="w-[15px] h-[16px] ml-[2px] bg-[#f0f0f0] border-r-2 border-b-2 border-[#a8a8a8] flex items-center justify-center">
          <svg viewBox="0 0 8 8" className="w-2 h-2"><path d="M1 1l6 6M7 1L1 7" stroke="#111" strokeWidth="1.8" /></svg>
        </div>
      </div>
      <div className="relative h-[747px] w-[327px] ml-[5px] bg-white border-l-2 border-t-2 border-[#8c8c8c] text-[14px] text-[#111] font-['Noto_Sans',sans-serif]">
        <svg viewBox="7 227 325 745" className="absolute left-0 top-0 w-[325px] h-[745px]">
          <path
            d="M22 239h9M41 241v16M46 262h8M64 268v198M64 285h15M64 307h15M64 330h15M69 352h10M88 357v13M93 375h9M112 380v63M112 398h14M112 420h14M112 443h14M64 465h14"
            stroke="#777"
            strokeDasharray="1 2"
            fill="none"
          />
          <TreeBox x={17} y={239} />
          <TreeBox x={41} y={262} />
          <TreeBox x={64} y={352} />
          <TreeBox x={88} y={375} />
        </svg>
        {tree.map((r, i) => (
          <div key={i} className={`relative h-[22.5px] flex items-center ${r.cls}`}>
            <svg viewBox="0 0 24 24" className="w-[20px] h-[20px] shrink-0">
              {treeIcons[r.i]}
            </svg>
            <span className={`ml-[4px] px-px whitespace-nowrap ${r.sel ? "bg-[#f3f3f3]" : ""}`}>{r.t}</span>
          </div>
        ))}
      </div>
      <div className="h-[21px] w-[327px] ml-[5px] flex">
        <div className="w-[68px] relative h-[20px] text-[14px] text-[#111] font-['Noto_Sans',sans-serif] flex justify-center items-center">
          <svg viewBox="0 0 68 20" className="absolute inset-0 w-[68px] h-[20px]">
            <path d="M2 0l6 19h50l6-19" fill="#f8f8f8" stroke="#444" strokeWidth="1.1" />
          </svg>
          <span className="relative">Project</span>
        </div>
        <div className="flex-1 border-t-2 border-[#333]" />
      </div>
    </div>
  );
}

const LBL = "#00aeff";
function T({ x, y, a, c, size, children }: { x: number; y: number; a?: "middle"; c?: string; size?: number; children: string }) {
  return (
    <text x={x} y={y + 6} textAnchor={a ?? "start"} fill={c ?? "#1a1a1a"} fontSize={size}>
      {children}
    </text>
  );
}
const Blue = (p: { x: number; y: number; children: string }) => <T {...p} c={LBL} />;
const Mid = (p: { x: number; y: number; children: string }) => <T {...p} a="middle" />;

const COLS = [568, 694, 819, 945, 1070, 1196, 1322, 1448, 1575, 1700, 1827];
function Dots({ ys }: { ys: number[] }) {
  return (
    <path
      d={ys.map((y) => COLS.map((x) => `M${x - 2} ${y}h4M${x} ${y - 2}v4`).join("")).join("")}
      stroke="#e2e2e2"
      strokeWidth="1"
    />
  );
}
function No({ x, y, nc }: { x: number; y: number; nc?: boolean }) {
  return (
    <path
      d={`M${x - 11} ${y - 10}v21M${x + 11} ${y - 10}v21${nc ? `M${x - 11} ${y + 11}L${x + 11} ${y - 10}` : ""}`}
      stroke="#222"
      strokeWidth="1.4"
      fill="none"
    />
  );
}
function Coil({ x, y }: { x: number; y: number }) {
  return <ellipse cx={x} cy={y} rx="13" ry="10" fill="#fff" stroke="#222" strokeWidth="1.4" />;
}
const Wire = ({ d }: { d: string }) => <path d={d} stroke="#333" strokeWidth="1.5" fill="none" />;
const Rail = ({ a, b }: { a: number; b: number }) => <path d={`M1322 ${a}V${b}`} stroke="#20b020" strokeWidth="1.6" />;

function Gutter({ n, o }: { n: string; o?: string }) {
  return (
    <div className="w-[85px] shrink-0 bg-[#f8f8f8] border-r-2 border-b-2 border-[#bdbdbd] pt-px overflow-hidden">
      <div className="pl-[5px] leading-[22px]">{n}</div>
      {o && <div className="text-right pr-[7px] leading-[22px]">{o}</div>}
    </div>
  );
}
function Header({ t, cls }: { t: string; cls: string }) {
  return (
    <div className={`relative ${cls} h-[23px] shrink-0 flex bg-[#ffff00]`}>
      <div className="w-[14px] bg-[#00a000]" />
      <span className="ml-[7px] leading-[23px] text-[#222]">{t}</span>
    </div>
  );
}

function Rung({ h, top, vh, n, o, head, cls, children }: { h: string; top: number; vh: number; n?: string; o?: string; head?: string; cls?: string; children?: React.ReactNode }) {
  return (
    <div className={`flex ${h} shrink-0`}>
      <Gutter n={n ?? ""} o={o} />
      <div className="w-[9px] shrink-0 bg-white" />
      <div className="relative flex-1 bg-white border-l-2 border-[#20b020] overflow-hidden">
        <svg viewBox={`443 ${top} 1454 ${vh}`} className="absolute left-0 top-0 w-[1454px] h-full">
          <rect x="443" y={top + vh - 2} width="1454" height="2" fill="#f4f4f4" />
          {children}
        </svg>
        {head && <Header t={head} cls={cls ?? ""} />}
      </div>
    </div>
  );
}

function ScrollBtn({ cls, d }: { cls: string; d: string }) {
  return (
    <div className={`${cls} shrink-0 bg-[#f8f8f8] border-r-2 border-b-2 border-[#9a9a9a] flex items-center justify-center`}>
      <svg viewBox="0 0 8 8" className="w-2 h-2"><path d={d} fill="#111" /></svg>
    </div>
  );
}

function Diagram() {
  return (
    <div className="flex-1 flex flex-col border-l-2 border-[#9a9a9a] font-['Liberation_Sans',Arial,sans-serif] text-[18px] text-[#1a1a1a] bg-[#f8f8f8]">
      <div className="flex h-[767px]">
        <div className="w-[1550px] flex flex-col overflow-hidden">
          <Rung h="h-[49px]" top={206} vh={49}>
            <Wire d="M568 206V213H619M642 213H694V206" />
            <No x={630} y={214} />
            <Blue x={573} y={235}>IR_OVEN_...</Blue>
            <Rail a={206} b={251} />
          </Rung>
          <Rung h="h-[504px]" top={255} vh={504} n="3" o="17" head="AUTO MODE" cls="mt-[11px]">
            <Dots ys={[257, 299, 377, 453, 529, 606, 684, 757]} />
            <Rail a={299} b={759} />
            <Wire d="M443 332H494M516 332H619M642 332H746M768 332H827M938 332H1248M1274 332H1322M568 332V410H619M642 410H694M694 332V563H1204M1316 564H1322" />
            <No x={505} y={332} />
            <No x={630} y={332} />
            <No x={630} y={410} />
            <No x={757} y={332} nc />
            <Coil x={1261} y={332} />
            <Mid x={504} y={310}>W0.02</Mid>
            <Mid x={630} y={310}>I: 0.03</Mid>
            <Mid x={756} y={310}>I: 0.04</Mid>
            <Mid x={1261} y={310}>W0.04</Mid>
            <Mid x={630} y={387}>W0.04</Mid>
            <Blue x={480} y={353}>AUTO</Blue>
            <Blue x={573} y={353}>WARM_ON...</Blue>
            <Blue x={699} y={353}>WARM_OF...</Blue>
            <Blue x={573} y={431}>IR_OVEN_A...</Blue>
            <Blue x={1341} y={332}>IR_OVEN_AUTO</Blue>
            <rect x="827" y="322" width="111" height="199" fill="#fff" stroke="#333" strokeWidth="1.5" />
            <path d="M829 377H936M865 453H898" stroke="#222" strokeWidth="1.4" />
            <Mid x={882} y={349}>{"<>(305)"}</Mid>
            <Mid x={882} y={388}>D10</Mid>
            <Blue x={830} y={410}>SV_TIMER...</Blue>
            <Mid x={882} y={465}>#0</Mid>
            <rect x="1204" y="553" width="112" height="198" fill="#fff" stroke="#333" strokeWidth="1.5" />
            <path d="M1206 607H1314M1243 684H1276" stroke="#222" strokeWidth="1.4" />
            <Mid x={1260} y={580}>TIM</Mid>
            <Mid x={1260} y={619}>0000</Mid>
            <Mid x={1260} y={696}>D10</Mid>
            <T x={1342} y={580} size={18.5}>100ms Timer (Timer) [BCD Type]</T>
            <Blue x={1342} y={619}>TIMER_AUTO</Blue>
            <T x={1342} y={640}>Timer number</T>
            <Blue x={1342} y={696}>SV_TIMER_AUTO</Blue>
            <T x={1342} y={718}>Set value</T>
          </Rung>
          <Rung h="h-[198px]" top={759} vh={198} n="4" o="27" head="OUT OVEN" cls="mt-[11px]">
            <Dots ys={[761, 803, 880, 955]} />
            <Rail a={803} b={955} />
            <Wire d="M443 836H494M516 836H1248M1274 836H1322M443 912H494M516 912H619M642 912H694V836" />
            <No x={505} y={836} />
            <No x={505} y={912} />
            <No x={630} y={912} nc />
            <Coil x={1261} y={836} />
            <Mid x={504} y={813}>W0.03</Mid>
            <Mid x={504} y={890}>W0.04</Mid>
            <Mid x={630} y={890}>T0000</Mid>
            <Mid x={1261} y={813}>Q: 100.00</Mid>
            <Blue x={448} y={857}>IR_OVEN_...</Blue>
            <Blue x={448} y={935}>IR_OVEN_A...</Blue>
            <Blue x={573} y={935}>TIMER_AUTO</Blue>
            <Blue x={1341} y={836}>OUT_OVEN</Blue>
          </Rung>
          <Rung h="h-[16px]" top={957} vh={16} n="5" head="OUT ALARM" cls="mt-[10px]" />
        </div>
        <div className="w-[20px] shrink-0 flex flex-col bg-[repeating-conic-gradient(#f0f0f0_0_25%,#ffffff_0_50%)] bg-[length:2px_2px]">
          <div className="h-[9px]" />
          <ScrollBtn cls="h-[22px]" d="M1 6h6L4 2z" />
          <div className="h-[178px]" />
          <div className="h-[224px] bg-[#f8f8f8] border-r-2 border-b-2 border-[#a0a0a0]" />
          <div className="flex-1" />
          <ScrollBtn cls="h-[20px]" d="M1 2h6L4 6z" />
        </div>
        <div className="flex-1 bg-[#f8f8f8]" />
      </div>
      <div className="h-[22px] flex border-b-2 border-[#bdbdbd]">
        <div className="w-[9px] border-r border-[#999]" />
        <ScrollBtn cls="w-[21px]" d="M6 1v6L2 4z" />
        <div className="w-[973px] bg-[#f8f8f8] border-r-2 border-b-2 border-[#9a9a9a]" />
        <div className="w-[525px] bg-[repeating-conic-gradient(#f0f0f0_0_25%,#ffffff_0_50%)] bg-[length:2px_2px]" />
        <ScrollBtn cls="w-[21px]" d="M2 1v6l4-3z" />
        <div className="flex-1 bg-[repeating-conic-gradient(#f0f0f0_0_25%,#ffffff_0_50%)] bg-[length:2px_2px]" />
      </div>
    </div>
  );
}

const cells = [
  { w: "w-[23px]", t: "" },
  { w: "w-[82px]", t: "" },
  { w: "w-[318px]", t: "NewPLC1(Net:0,Node:0) - Offline" },
  { w: "w-[68px]", t: "" },
  { w: "w-[68px]", t: "" },
  { w: "w-[163px]", t: "rung 6 (4, 0)  - 150%" },
  { w: "w-[132px]", t: "" },
  { w: "w-[74px]", t: "Smart" },
  { w: "w-[35px]", t: "" },
  { w: "w-[37px]", t: "NUM" },
];

function StatusBar() {
  return (
    <div className="h-[23px] bg-[#f8f8f8] flex text-[14px] text-[#111] font-['Noto_Sans',sans-serif] overflow-hidden">
      <span className="pl-[2px] pt-[4px] leading-[20px] flex-1">For Help, press F1</span>
      <div className="flex gap-[4px] pr-[5px] pt-[4px]">
        {cells.map((c, i) => (
          <div key={i} className={`${c.w} h-[24px] border-t-2 border-l-2 border-[#c4c4c4] pl-[1px] leading-[18px] whitespace-pre overflow-hidden`}>
            {c.t}
          </div>
        ))}
      </div>
    </div>
  );
}

export default function App() {
  return (
    <div className="relative w-[1920px] h-[1018px] flex flex-col overflow-hidden bg-[#f8f8f8]">
      <TitleBar />
      <MenuBar />
      <div className="h-[150px] flex flex-col">
        {rows.map((r, i) => (
          <div key={i} className="h-[37.5px] flex gap-[2px] items-stretch">
            {r.map((t, j) => (
              <Toolbar key={j} t={t} />
            ))}
            {i === 3 && (
              <div className="ml-[8px] self-center text-[24.8px] font-bold text-black font-['Noto_Sans',sans-serif] whitespace-nowrap">
                InstrumentationTools.com
              </div>
            )}
          </div>
        ))}
      </div>
      <div className="absolute left-[908px] top-[60px] text-[24px] text-[#9a9a9a]/60 font-['Open_Sans',sans-serif] font-light">Inst Tools</div>
      <div className="flex flex-1 border-t-2 border-[#9a9a9a]">
        <LeftPanel />
        <Diagram />
      </div>
      <StatusBar />
    </div>
  );
}
